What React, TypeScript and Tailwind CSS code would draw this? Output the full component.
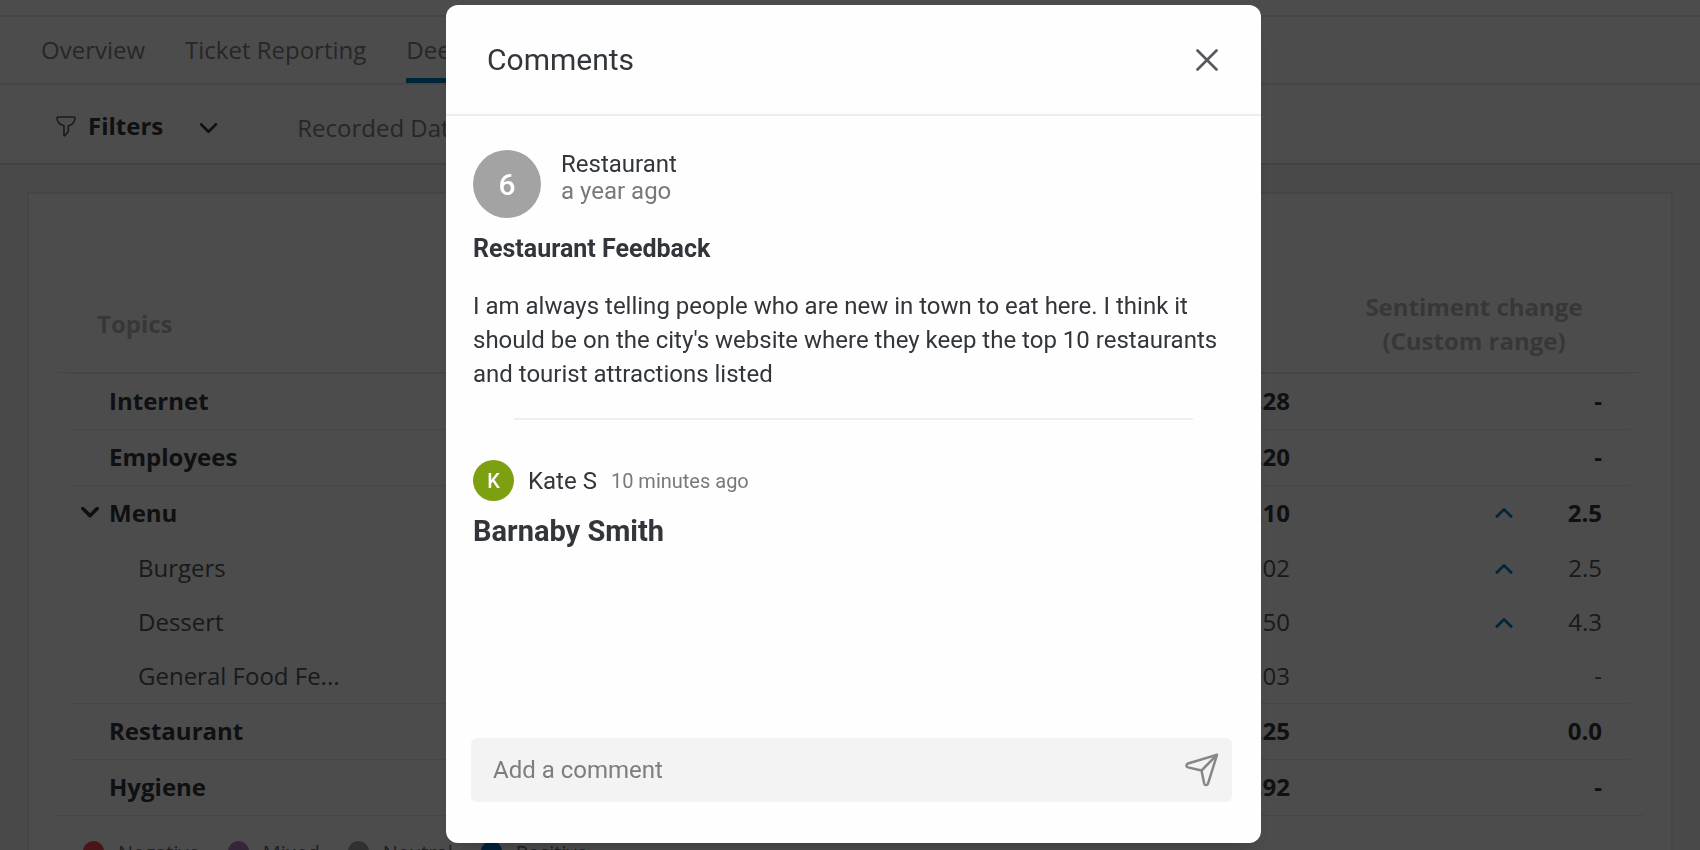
import { useState } from 'react'

type Topic = {
  name: string
  volume: number
  score: string
  change: string
  up?: boolean
  open?: boolean
  child?: boolean
}

const topics: Topic[] = [
  { name: 'Internet', volume: 4, score: '3.28', change: '-' },
  { name: 'Employees', volume: 5, score: '3.20', change: '-' },
  { name: 'Menu', volume: 42, score: '4.10', change: '2.5', up: true, open: true },
  { name: 'Burgers', volume: 17, score: '7.02', change: '2.5', up: true, child: true },
  { name: 'Dessert', volume: 14, score: '7.50', change: '4.3', up: true, child: true },
  { name: 'General Food Fe...', volume: 15, score: '10.03', change: '-', child: true },
  { name: 'Restaurant', volume: 12, score: '5.25', change: '0.0' },
  { name: 'Hygiene', volume: 3, score: '1.92', change: '-' },
]

const tabs = ['Overview', 'Ticket Reporting', 'Deep Dive']

const legend = [
  { label: 'Negative', dot: 'bg-[#f04a55]' },
  { label: 'Mixed', dot: 'bg-[#b080c0]' },
  { label: 'Neutral', dot: 'bg-[#a0a0a0]' },
  { label: 'Positive', dot: 'bg-[#007ac0]' },
]

function Chevron({ up = false, className = '', width = 3 }: { up?: boolean; className?: string; width?: number }) {
  return (
    <svg viewBox="0 0 20 12" className={className} fill="none" stroke="currentColor" strokeWidth={width} aria-hidden="true">
      <path d={up ? 'M2 10.5 10 2.5l8 8' : 'M2 1.5l8 8 8-8'} strokeLinecap="round" strokeLinejoin="round" />
    </svg>
  )
}

function FunnelIcon() {
  return (
    <svg viewBox="0 0 20 21" className="h-[21px] w-5" fill="none" stroke="#55585c" strokeWidth="1.6" strokeLinejoin="round" aria-hidden="true">
      <path d="M2 1h16c.8 0 1.1.5 1 1.3-.5 4-3 6.6-6.7 7.5v5.7l-3.5 4.200c-.3.3-.8.2-.8-.3V9.800C4.300 8.900 1.500 6.300 1 2.300.9 1.500 1.200 1 2 1z" />
    </svg>
  )
}

function SendIcon() {
  return (
    <svg viewBox="0 0 34 34" className="size-[34px]" fill="none" stroke="#858789" strokeWidth="2.5" strokeLinejoin="round" aria-hidden="true">
      <path d="M32 1.800 3 10.500c-2.100.7-2.100 3.300 0 3.900L16.500 17.500l2.700 13c.5 2.100 3.200 2.100 3.800.1z" />
      <path d="M16.500 17.500 32 1.800" />
    </svg>
  )
}

function TopicRow({ topic }: { topic: Topic }) {
  const rule = topic.child ? '' : 'border-t border-[#e6e6e6] pb-0.5'
  return (
    <tr className={topic.child ? 'h-[54px] text-[#54585c]' : 'h-14 font-bold text-[#32363a]'}>
      <td></td>
      <th scope="row" className={`${rule} text-left ${topic.child ? 'pl-[68px] font-normal' : 'pl-[11px] font-bold'}`}>
        {topic.child ? (
          topic.name
        ) : (
          <span className="flex items-center gap-[10px]">
            <span className="flex w-[18px]">
              {topic.open && (
                <button type="button" aria-label={`Collapse ${topic.name}`}>
                  <Chevron className="h-[11px] w-[18px]" width={4} />
                </button>
              )}
            </span>
            {topic.name}
          </span>
        )}
      </th>
      <td className={`${rule} pr-7 text-right`}>{topic.volume}</td>
      <td className={`${rule} pr-7 text-right`}>{topic.score}</td>
      <td className={`${rule} pr-7`}>
        <div className="flex items-center justify-end">
          {topic.up && <Chevron up className="h-[11px] w-[18px] text-[#007ac0]" />}
          <span className="w-[89px] text-right">{topic.change}</span>
        </div>
      </td>
      <td></td>
    </tr>
  )
}

function Dashboard() {
  return (
    <div className="font-['Open_Sans',sans-serif] text-[24px] text-[#808285]">
      <div className="h-[15px] bg-white"></div>

      <nav className="flex h-[70px] gap-10 border-t-2 border-b-2 border-[#eaeaea] bg-white px-[41px]">
        {tabs.map(tab => (
          <a
            key={tab}
            href="#"
            className={
              tab === 'Deep Dive'
                ? 'flex items-center border-b-[5px] border-[#007ac0] pt-[5px]'
                : 'flex items-center'
            }
          >
            {tab}
          </a>
        ))}
      </nav>

      <div className="flex h-20 items-center border-b-2 border-[#dcdcdc] bg-white pt-1 pl-14 shadow-sm">
        <button type="button" className="flex items-center gap-3 font-bold text-[#32363a]">
          <FunnelIcon />
          Filters
          <Chevron className="mt-1 ml-6 h-[11px] w-[19px]" width={3} />
        </button>
        <span className="pt-1 pl-[79px]">Recorded Date: All Time</span>
      </div>

      <div className="bg-[#f3f3f3] px-[27px] pt-[27px]">
        <div className="border-2 border-[#e6e6e6] bg-white px-7">
          <table className="w-full table-fixed border-separate border-spacing-0">
            <colgroup>
              <col className="w-[13px]" />
              <col className="w-[380px]" />
              <col />
              <col className="w-[260px]" />
              <col className="w-[312px]" />
              <col className="w-[13px]" />
            </colgroup>
            <thead className="leading-[34px] text-[#b8babc]">
              <tr>
                <td className="border-b border-[#e6e6e6]"></td>
                <th scope="col" className="border-b border-[#e6e6e6] pt-[96px] pb-[14px] pl-[27px] text-left">Topics</th>
                <th scope="col" className="border-b border-[#e6e6e6] pt-[96px] pb-[14px]">Volume</th>
                <th scope="col" className="border-b border-[#e6e6e6] pt-[96px] pr-7 pb-[14px]">Score</th>
                <th scope="col" className="border-b border-[#e6e6e6] pt-[96px] pb-[14px]">
                  Sentiment change
                  <br />
                  (Custom range)
                </th>
                <td className="border-b border-[#e6e6e6]"></td>
              </tr>
            </thead>
            <tbody>
              {topics.map(topic => (
                <TopicRow key={topic.name} topic={topic} />
              ))}
            </tbody>
          </table>

          <ul className="flex gap-7 border-t border-[#e6e6e6] px-[26px] pt-[19px] pb-10 text-[20px] leading-7 text-[#6a6d70]">
            {legend.map(item => (
              <li key={item.label} className="flex items-center gap-[14px]">
                <span className={`size-[21px] rounded-full ${item.dot}`}></span>
                <span className="pt-1">{item.label}</span>
              </li>
            ))}
          </ul>
        </div>
      </div>
    </div>
  )
}

function CommentsDialog() {
  const [draft, setDraft] = useState('')

  return (
    <div
      role="dialog"
      aria-modal="true"
      aria-labelledby="comments-title"
      className="flex w-full max-w-[815px] flex-col rounded-xl bg-[#fefefe] font-['Roboto',sans-serif] text-[24px] text-[#32363a] shadow-xl"
    >
      <header className="flex h-[111px] shrink-0 items-center justify-between border-b-2 border-[#ededed] pr-[43px] pl-[41px]">
        <h2 id="comments-title" className="text-[30px] leading-9">Comments</h2>
        <button type="button" aria-label="Close">
          <svg viewBox="0 0 22 22" className="size-[22px]" fill="none" stroke="#55595d" strokeWidth="2.600" strokeLinecap="round" aria-hidden="true">
            <path d="M1.500 1.500l19 19M20.500 1.500l-19 19" />
          </svg>
        </button>
      </header>

      <div className="flex-1 px-[27px] pt-[34px]">
        {/* feedback being discussed */}
        <div className="flex gap-5">
          <span className="flex size-[68px] items-center justify-center rounded-full bg-[#a3a3a3] text-[30px] font-medium text-white">6</span>
          <div className="pt-px leading-[27px]">
            <p>Restaurant</p>
            <p className="text-[#77797b]">a year ago</p>
          </div>
        </div>
        <h3 className="mt-[14px] text-[25px] leading-[34px] font-bold">Restaurant Feedback</h3>
        <p className="mt-[23px] leading-[34px]">
          I am always telling people who are new in town to eat here. I think it should be on the city's website where
          they keep the top 10 restaurants and tourist attractions listed
        </p>
        <hr className="mx-[41px] mt-[27px] border-t-2 border-[#eeeeee]" />

        {/* replies */}
        <div className="mt-10 flex items-center gap-[14px]">
          <span className="flex size-[41px] items-center justify-center rounded-full bg-[#7ca010] text-[20px] font-medium text-white">K</span>
          <span>Kate S</span>
          <span className="text-[20px] text-[#77797b]">10 minutes ago</span>
        </div>
        <p className="mt-3 text-[29px] leading-9 font-bold">Barnaby Smith</p>
      </div>

      <div className="pr-[29px] pb-[41px] pl-[25px]">
        <form
          onSubmit={e => e.preventDefault()}
          className="flex h-16 items-center rounded-md bg-[#f3f3f3] pr-[13px] pl-[22px]"
        >
          <input
            type="text"
            aria-label="Add a comment"
            placeholder="Add a comment"
            value={draft}
            onChange={e => setDraft(e.target.value)}
            className="min-w-0 flex-1 bg-transparent outline-none placeholder:text-[#7b7d7f]"
          />
          <button type="submit" aria-label="Send">
            <SendIcon />
          </button>
        </form>
      </div>
    </div>
  )
}

export default function App() {
  return (
    <div className="h-screen overflow-hidden">
      <Dashboard />
      <div className="fixed inset-0 flex justify-center bg-black/70 pt-[5px] pb-[7px] pl-[7px]">
        <CommentsDialog />
      </div>
    </div>
  )
}
